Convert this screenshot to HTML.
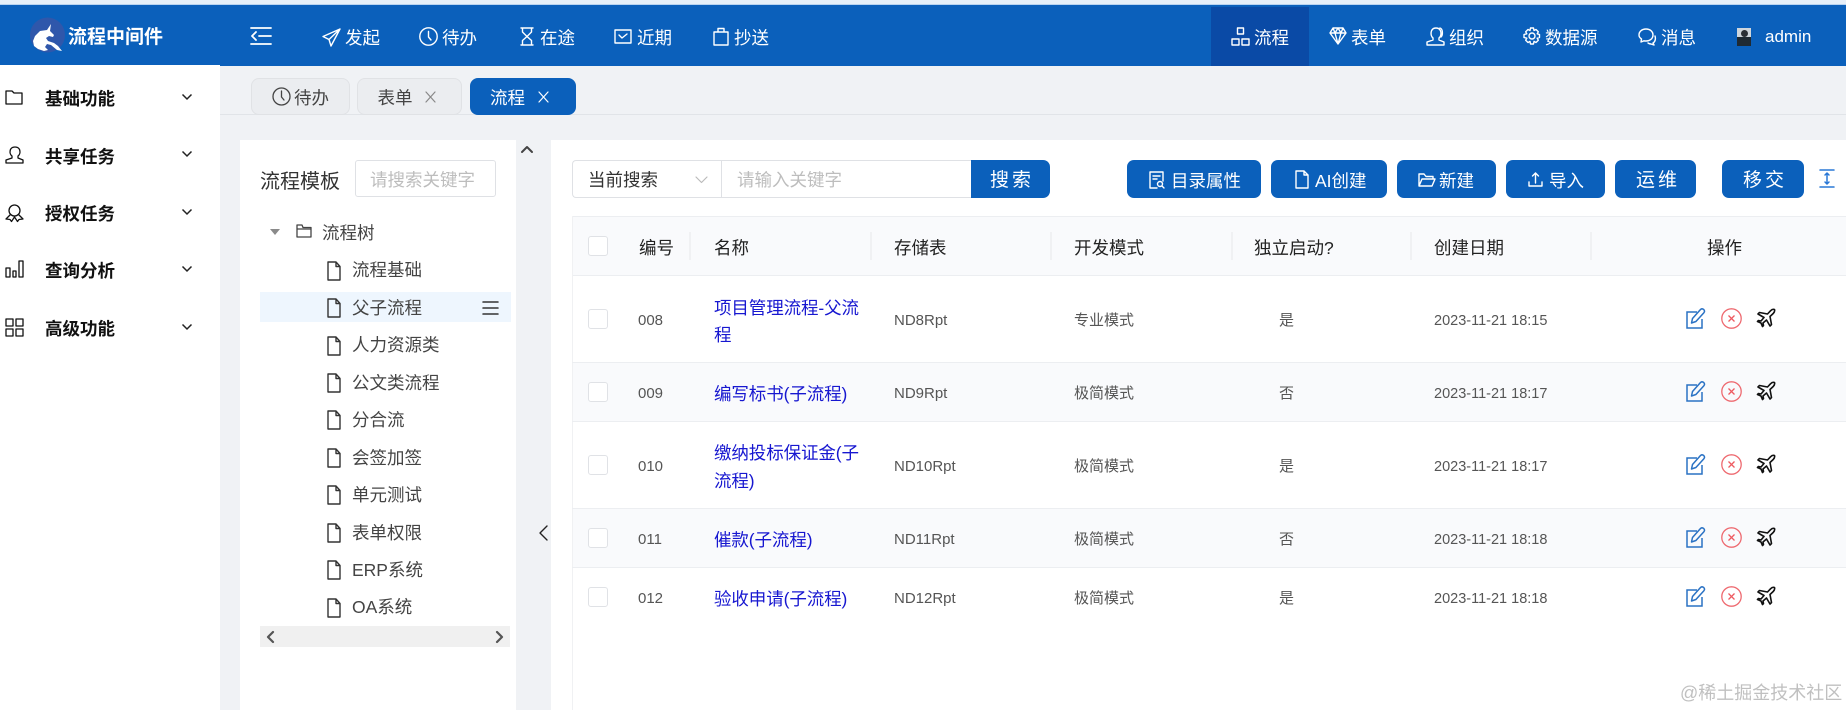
<!DOCTYPE html>
<html lang="zh"><head><meta charset="utf-8"><title>流程中间件</title>
<style>
html,body{margin:0;padding:0}
body{width:1846px;height:710px;overflow:hidden;position:relative;background:#f0f2f5;font-family:"Liberation Sans","Noto Sans CJK SC",sans-serif;font-size:17.5px;color:#333}
div,span,svg{position:absolute;box-sizing:border-box}
.t{white-space:nowrap;line-height:24px;height:24px;margin-top:1px}
.w{color:#fff}
.b{background:#0b60bb;border-radius:7px;height:38px;top:160px}
.m{font-weight:700;color:#111;left:45px}
.tr{left:352px;color:#444}
.h{color:#222;top:235px}
.c{font-size:15px;color:#555}
.n{left:714px;color:#1717d0;letter-spacing:-.1px}
.sep{width:2px;height:28px;top:232px;background:#f0f1f3}
.cb{left:588px;width:19.5px;height:19.5px;border:1px solid #e0e2e6;border-radius:3px;background:#fff}
.rl{left:572px;width:1274px;height:1px;background:#eceef1}
.i{overflow:visible;fill:none;stroke-linecap:round;stroke-linejoin:round}
.nv{stroke:#fff;stroke-width:1.4}
</style></head><body>
<svg width="0" height="0" style="left:0;top:0">
<defs>
<symbol id="file" viewBox="0 0 14 20"><path d="M1 1h8l4 4.5V19H1zM9 1v4.5h4" fill="none" stroke="#333" stroke-width="1.4" stroke-linejoin="round"/></symbol>
<symbol id="edit" viewBox="0 0 21 21"><path d="M11 4H1v16h15v-9" fill="none" stroke="#2a72c4" stroke-width="1.5"/><path d="M5.5 15l1-4.500 8-9c1-1 2.200-.8 3.200 0 1 1 1 2.200.2 3.200l-8 8.800z" fill="none" stroke="#2a72c4" stroke-width="1.5" stroke-linejoin="round"/></symbol>
<symbol id="del" viewBox="0 0 21 21"><circle cx="10.500" cy="10.500" r="9.700" fill="none" stroke="#ee6a70" stroke-width="1.300"/><path d="M7.500 7.500l6 6M13.500 7.500l-6 6" stroke="#ee5a60" stroke-width="1.300"/></symbol>
<symbol id="plane" viewBox="0 0 20 20"><path d="M18.500 1.500c-1.500-.5-3 .3-4 1.300L11.500 6 3.500 4.500 2 6l6 3.500L5 13l-2.500-.5-1 1L5 15l1.500 3.500 1-1L7 15l3.500-3 3.500 6 1.500-1.500L14 8.500l3.200-3c1-1 1.800-2.500 1.300-4z" fill="none" stroke="#111" stroke-width="1.600" stroke-linejoin="round"/></symbol>
<symbol id="chev" viewBox="0 0 12 8"><path d="M1.500 1.500L6 6l4.500-4.500" fill="none" stroke="#222" stroke-width="1.500"/></symbol>
</defs></svg>

<!-- header -->
<div style="left:0;top:0;width:1846px;height:5px;background:#e6eff9;border-bottom:1px solid #b9d3f0"></div>
<div style="left:0;top:5px;width:1846px;height:60.500px;background:#0b60bb"></div>
<div style="left:1211px;top:7px;width:98px;height:58.500px;background:#0a4aa6"></div>
<svg style="left:30px;top:17px" width="36" height="37" viewBox="30 17 36 37"><circle cx="47.500" cy="35" r="17.500" fill="#2f57ab"/><path d="M51 24L47 30 40 31 35 36 33 41 34 46 38 49 44 51 48 50 45 47 47 44 51 45 57 50 62 51 58 46 54 43 48 41 46 38 49 36 53 37 54 35 50 31z" fill="#fff"/></svg>
<span class="t w" style="left:68px;top:25px;font-size:19px;font-weight:700">流程中间件</span>
<svg class="i nv" style="left:251px;top:27px;stroke-width:1.800" width="21" height="18"><path d="M0 1h20M8 9h12M0 17h20M5 5L1 9l4 4"/></svg>

<svg class="i nv" style="left:322px;top:28px" width="19" height="19"><path d="M18 1L1 8.500l6 3 2 6.500zM7 11.500L18 1"/></svg>
<span class="t w" style="left:345px;top:25px">发起</span>
<svg class="i nv" style="left:419px;top:27px" width="19" height="19"><circle cx="9.500" cy="9.500" r="8.700"/><path d="M9.500 4.500v5.500l2.500 3"/></svg>
<span class="t w" style="left:442px;top:25px">待办</span>
<svg class="i nv" style="left:520px;top:27px" width="14" height="19"><path d="M1 1h12M1 18h12M2.500 1v4l4.500 4.500-4.500 4V18M11.500 1v4L7 9.500l4.500 4V18"/></svg>
<span class="t w" style="left:540px;top:25px">在途</span>
<svg class="i nv" style="left:614px;top:29px" width="18" height="15"><path d="M1 1h16v13H1zM5 6l3 3 5-4"/></svg>
<span class="t w" style="left:637px;top:25px">近期</span>
<svg class="i nv" style="left:713px;top:27px" width="16" height="19"><path d="M1 5h14v13H1zM5 5V1.500h6V5"/></svg>
<span class="t w" style="left:734px;top:25px">抄送</span>

<svg class="i nv" style="left:1231px;top:27px" width="19" height="19"><path d="M6.500 1h6v6h-6zM1 12h7v6H1zM11 12h7v6h-7z"/></svg>
<span class="t w" style="left:1254px;top:25px">流程</span>
<svg class="i nv" style="left:1329px;top:27px" width="18" height="18"><path d="M4 1h10l3 5-8 11L1 6zM1 6h16M6 6l3 11 3-11M4 1l2 5 3-5 3 5 2-5"/></svg>
<span class="t w" style="left:1351px;top:25px">表单</span>
<svg class="i nv" style="left:1426px;top:27px" width="19" height="19"><path d="M7 11c-3-2-3-10 3-10s6 8 3 10v2l5 2v3H1v-3l6-2zM14 1c3 1 3 7 1 9"/></svg>
<span class="t w" style="left:1449px;top:25px">组织</span>
<svg class="i nv" style="left:1523px;top:27px" width="18" height="18"><circle cx="9" cy="9" r="3"/><path d="M7.500 1h3l.5 2.500 2-1 2.300 2.300-1.100 2 2.300.7v3l-2.300.7 1.100 2-2.300 2.300-2-1.100-.5 2.600h-3L7 14.400l-2 1.100-2.300-2.300 1.100-2L1 10.500v-3l2.800-.7-1.100-2L5 2.500l2 1z"/></svg>
<span class="t w" style="left:1545px;top:25px">数据源</span>
<svg class="i nv" style="left:1638px;top:28px" width="19" height="18"><path d="M8 1c4 0 7 2.500 7 6s-3 6-7 6c-1 0-1.500 0-2-.2L3 14l.5-3C2 10 1 8.500 1 7c0-3.500 3-6 7-6zM17 8c1 3 0 6-2 7l1 2-3-1c-1 0-2-.3-3-1"/></svg>
<span class="t w" style="left:1661px;top:25px">消息</span>
<div style="left:1737px;top:28px;width:14px;height:18px;background:#cfd6dc"></div>
<div style="left:1737px;top:37px;width:14px;height:9px;background:#1f2a33"></div>
<div style="left:1741px;top:30px;width:7px;height:7px;background:#2a2f35;border-radius:50%"></div>
<span class="t w" style="left:1765px;top:24px;font-size:17px">admin</span>

<!-- sidebar -->
<div style="left:0;top:65px;width:220px;height:645px;background:#fff"></div>
<svg class="i" style="left:5px;top:90px;stroke:#111;stroke-width:1.300" width="18" height="15"><path d="M1 1h6l2 2h8v11H1z"/></svg>
<span class="t m" style="top:86px">基础功能</span>
<svg class="i" style="left:5px;top:146px;stroke:#111;stroke-width:1.300" width="19" height="18"><path d="M7 10c-3-2-3-9 3-9s6 7 3 9v2l5 2v3H1v-3l6-2z"/></svg>
<span class="t m" style="top:144px">共享任务</span>
<svg class="i" style="left:5px;top:204px;stroke:#111;stroke-width:1.300" width="19" height="18"><circle cx="9.500" cy="6.500" r="5.500"/><path d="M5 11l-4 4 4 .5 1.500 2L9.500 13l3 4.500 1.500-2 4-.5-4-4"/></svg>
<span class="t m" style="top:201px">授权任务</span>
<svg class="i" style="left:5px;top:260px;stroke:#111;stroke-width:1.300" width="19" height="18"><path d="M1 8h4v9H1zM8 11h3v6H8zM14 1h4v16h-4z"/></svg>
<span class="t m" style="top:258px">查询分析</span>
<svg class="i" style="left:5px;top:318px;stroke:#111;stroke-width:1.300" width="19" height="19"><path d="M1 1h7v7H1zM11 1h7v7h-7zM1 11h7v7H1zM11 11h7v7h-7z"/></svg>
<span class="t m" style="top:316px">高级功能</span>
<svg style="left:181px;top:93px" width="12" height="8"><use href="#chev"/></svg>
<svg style="left:181px;top:150px" width="12" height="8"><use href="#chev"/></svg>
<svg style="left:181px;top:208px" width="12" height="8"><use href="#chev"/></svg>
<svg style="left:181px;top:265px" width="12" height="8"><use href="#chev"/></svg>
<svg style="left:181px;top:323px" width="12" height="8"><use href="#chev"/></svg>

<!-- tabs -->
<div style="left:220px;top:114px;width:1626px;height:1px;background:#e1e4e8"></div>
<div style="left:251px;top:78px;width:99px;height:37px;background:#ebedf0;border:1px solid #e0e2e5;border-radius:8px"></div>
<svg class="i" style="left:272px;top:87px;stroke:#444;stroke-width:1.300" width="19" height="19"><circle cx="9.500" cy="9.500" r="8.500"/><path d="M9.500 4v6l2.500 3"/></svg>
<span class="t" style="left:294px;top:85px;color:#444">待办</span>
<div style="left:357px;top:78px;width:105px;height:37px;background:#ebedf0;border:1px solid #e0e2e5;border-radius:8px"></div>
<span class="t" style="left:377.500px;top:85px;color:#444">表单</span>
<svg class="i" style="left:425px;top:91px;stroke:#888;stroke-width:1.200" width="11" height="12"><path d="M1 1l9 10M10 1l-9 10"/></svg>
<div style="left:470px;top:78px;width:106px;height:37px;background:#0b60bb;border-radius:8px"></div>
<span class="t w" style="left:490px;top:85px">流程</span>
<svg class="i" style="left:538px;top:91px;stroke:#fff;stroke-width:1.200" width="11" height="12"><path d="M1 1l9 10M10 1l-9 10"/></svg>

<!-- tree panel -->
<div style="left:240px;top:140px;width:276px;height:570px;background:#fff"></div>
<svg class="i" style="left:521px;top:145px;stroke:#444;stroke-width:2" width="12" height="9"><path d="M1 7l5-5 5 5"/></svg>
<svg class="i" style="left:539px;top:525px;stroke:#222;stroke-width:1.400" width="9" height="16"><path d="M8 1L1 8l7 7"/></svg>
<span class="t" style="left:260px;top:167px;font-size:20px;color:#333;height:28px;line-height:28px">流程模板</span>
<div style="left:355px;top:160px;width:141px;height:37px;border:1px solid #dfe1e5;border-radius:3px;background:#fff"></div>
<span class="t" style="left:370px;top:167px;color:#bdbdbd">请搜索关键字</span>
<svg style="left:270px;top:228px" width="10" height="8"><path d="M0 1h10L5 7z" fill="#8a8a8a"/></svg>
<svg class="i" style="left:296px;top:224px;stroke:#444;stroke-width:1.300" width="16" height="14"><path d="M1 3.500V1h5l1 2.500h8V13H1zM1 5h14"/></svg>
<span class="t tr" style="left:322px;top:220px">流程树</span>
<div style="left:260px;top:292px;width:251px;height:30px;background:#eef6fe"></div>
<svg class="i" style="left:483px;top:301px;stroke:#333;stroke-width:1.500" width="16" height="14"><path d="M0 1h15M0 7h15M0 13h15"/></svg>
<svg style="left:327px;top:261px" width="14" height="20"><use href="#file"/></svg><span class="t tr" style="top:257px">流程基础</span>
<svg style="left:327px;top:298px" width="14" height="20"><use href="#file"/></svg><span class="t tr" style="top:295px">父子流程</span>
<svg style="left:327px;top:336px" width="14" height="20"><use href="#file"/></svg><span class="t tr" style="top:332px">人力资源类</span>
<svg style="left:327px;top:373px" width="14" height="20"><use href="#file"/></svg><span class="t tr" style="top:370px">公文类流程</span>
<svg style="left:327px;top:410px" width="14" height="20"><use href="#file"/></svg><span class="t tr" style="top:407px">分合流</span>
<svg style="left:327px;top:448px" width="14" height="20"><use href="#file"/></svg><span class="t tr" style="top:445px">会签加签</span>
<svg style="left:327px;top:485px" width="14" height="20"><use href="#file"/></svg><span class="t tr" style="top:482px">单元测试</span>
<svg style="left:327px;top:523px" width="14" height="20"><use href="#file"/></svg><span class="t tr" style="top:520px">表单权限</span>
<svg style="left:327px;top:560px" width="14" height="20"><use href="#file"/></svg><span class="t tr" style="top:557px">ERP系统</span>
<svg style="left:327px;top:598px" width="14" height="20"><use href="#file"/></svg><span class="t tr" style="top:594px">OA系统</span>
<div style="left:260px;top:626px;width:250px;height:21px;background:#f0f0f0"></div>
<svg class="i" style="left:266px;top:631px;stroke:#555;stroke-width:2.200" width="9" height="12"><path d="M7 1L2 6l5 5"/></svg>
<svg class="i" style="left:495px;top:631px;stroke:#555;stroke-width:2.200" width="9" height="12"><path d="M2 1l5 5-5 5"/></svg>

<!-- main panel -->
<div style="left:551px;top:140px;width:1295px;height:570px;background:#fff"></div>
<div style="left:572px;top:160px;width:399px;height:38px;border:1px solid #dfe1e5;border-right:0;border-radius:4px 0 0 4px"></div>
<div style="left:721px;top:160px;width:1px;height:38px;background:#dfe1e5"></div>
<span class="t" style="left:588px;top:167px;color:#333">当前搜索</span>
<svg class="i" style="left:695px;top:176px;stroke:#bbb;stroke-width:1.200" width="13" height="8"><path d="M1 1l5.500 5.500L12 1"/></svg>
<span class="t" style="left:737px;top:167px;color:#bdbdbd">请输入关键字</span>
<div style="left:971px;top:160px;width:79px;height:38px;background:#0b60bb;border-radius:0 7px 7px 0"></div>
<span class="t w" style="left:990px;top:168px;font-size:19px;letter-spacing:3px">搜索</span>

<div class="b" style="left:1127px;width:134px"></div>
<svg class="i nv" style="left:1149px;top:171px" width="16" height="19"><path d="M8 17H1V1h13v9M4 5h7M4 8h4"/><circle cx="11" cy="13" r="2.500"/><path d="M13 15l2 2"/></svg>
<span class="t w" style="left:1171px;top:168px">目录属性</span>
<div class="b" style="left:1271px;width:116px"></div>
<svg class="i nv" style="left:1295px;top:170px" width="14" height="19"><path d="M1 1h8l4 4v13H1zM9 1v4h4"/></svg>
<span class="t w" style="left:1315px;top:168px">AI创建</span>
<div class="b" style="left:1397px;width:99px"></div>
<svg class="i nv" style="left:1418px;top:173px" width="18" height="14"><path d="M1 13V1h5l2 2.500h7V6M1 13l3-7h13l-3 7z"/></svg>
<span class="t w" style="left:1439px;top:168px">新建</span>
<div class="b" style="left:1506px;width:99px"></div>
<svg class="i nv" style="left:1528px;top:172px" width="15" height="15"><path d="M7.500 11V1M4.500 4l3-3 3 3M1 10v4h13v-4"/></svg>
<span class="t w" style="left:1549px;top:168px">导入</span>
<div class="b" style="left:1615px;width:81px"></div>
<span class="t w" style="left:1636px;top:168px;font-size:19px;letter-spacing:3px">运维</span>
<div class="b" style="left:1722px;width:82px"></div>
<span class="t w" style="left:1743px;top:168px;font-size:19px;letter-spacing:3px">移交</span>
<svg class="i" style="left:1819px;top:169px;stroke:#2a78d6;stroke-width:1.500" width="16" height="19"><path d="M1 1h14M1 18h14M8 4v11M6 6l2-2 2 2M6 13l2 2 2-2"/></svg>

<!-- table -->
<div style="left:572px;top:216px;width:1274px;height:60px;background:#f9fafc;border-top:1px solid #eceef1;border-bottom:1px solid #eceef1"></div>
<div style="left:572px;top:216px;width:1px;height:494px;background:#f0f1f3"></div>
<div style="left:573px;top:362px;width:1273px;height:59px;background:#f9fafc"></div>
<div style="left:573px;top:508px;width:1273px;height:59px;background:#f9fafc"></div>
<div class="rl" style="top:362px"></div><div class="rl" style="top:421px"></div><div class="rl" style="top:508px"></div><div class="rl" style="top:567px"></div>
<div class="sep" style="left:689px"></div><div class="sep" style="left:870px"></div><div class="sep" style="left:1050px"></div><div class="sep" style="left:1231px"></div><div class="sep" style="left:1410px"></div><div class="sep" style="left:1590px"></div>
<div class="cb" style="top:236px"></div>
<span class="t h" style="left:639px">编号</span><span class="t h" style="left:714px">名称</span><span class="t h" style="left:894px">存储表</span><span class="t h" style="left:1074px">开发模式</span><span class="t h" style="left:1254px">独立启动?</span><span class="t h" style="left:1434px">创建日期</span><span class="t h" style="left:1707px">操作</span>

<div class="cb" style="top:309px"></div><div class="cb" style="top:382px"></div><div class="cb" style="top:455px"></div><div class="cb" style="top:528px"></div><div class="cb" style="top:587px"></div>

<span class="t c" style="left:638px;top:308px">008</span>
<span class="t n" style="top:295px">项目管理流程-父流</span><span class="t n" style="top:322px">程</span>
<span class="t c" style="left:894px;top:308px">ND8Rpt</span><span class="t c" style="left:1074px;top:308px">专业模式</span><span class="t c" style="left:1279px;top:308px">是</span><span class="t c" style="left:1434px;top:308px;font-size:14.500px">2023-11-21 18:15</span>

<span class="t c" style="left:638px;top:381px">009</span>
<span class="t n" style="top:381px">编写标书(子流程)</span>
<span class="t c" style="left:894px;top:381px">ND9Rpt</span><span class="t c" style="left:1074px;top:381px">极简模式</span><span class="t c" style="left:1279px;top:381px">否</span><span class="t c" style="left:1434px;top:381px;font-size:14.500px">2023-11-21 18:17</span>

<span class="t c" style="left:638px;top:454px">010</span>
<span class="t n" style="top:440px">缴纳投标保证金(子</span><span class="t n" style="top:468px">流程)</span>
<span class="t c" style="left:894px;top:454px">ND10Rpt</span><span class="t c" style="left:1074px;top:454px">极简模式</span><span class="t c" style="left:1279px;top:454px">是</span><span class="t c" style="left:1434px;top:454px;font-size:14.500px">2023-11-21 18:17</span>

<span class="t c" style="left:638px;top:527px">011</span>
<span class="t n" style="top:527px">催款(子流程)</span>
<span class="t c" style="left:894px;top:527px">ND11Rpt</span><span class="t c" style="left:1074px;top:527px">极简模式</span><span class="t c" style="left:1279px;top:527px">否</span><span class="t c" style="left:1434px;top:527px;font-size:14.500px">2023-11-21 18:18</span>

<span class="t c" style="left:638px;top:586px">012</span>
<span class="t n" style="top:586px">验收申请(子流程)</span>
<span class="t c" style="left:894px;top:586px">ND12Rpt</span><span class="t c" style="left:1074px;top:586px">极简模式</span><span class="t c" style="left:1279px;top:586px">是</span><span class="t c" style="left:1434px;top:586px;font-size:14.500px">2023-11-21 18:18</span>

<svg style="left:1686px;top:308px" width="21" height="21"><use href="#edit"/></svg><svg style="left:1721px;top:308px" width="21" height="21"><use href="#del"/></svg><svg style="left:1756px;top:308px" width="20" height="20"><use href="#plane"/></svg>
<svg style="left:1686px;top:381px" width="21" height="21"><use href="#edit"/></svg><svg style="left:1721px;top:381px" width="21" height="21"><use href="#del"/></svg><svg style="left:1756px;top:381px" width="20" height="20"><use href="#plane"/></svg>
<svg style="left:1686px;top:454px" width="21" height="21"><use href="#edit"/></svg><svg style="left:1721px;top:454px" width="21" height="21"><use href="#del"/></svg><svg style="left:1756px;top:454px" width="20" height="20"><use href="#plane"/></svg>
<svg style="left:1686px;top:527px" width="21" height="21"><use href="#edit"/></svg><svg style="left:1721px;top:527px" width="21" height="21"><use href="#del"/></svg><svg style="left:1756px;top:527px" width="20" height="20"><use href="#plane"/></svg>
<svg style="left:1686px;top:586px" width="21" height="21"><use href="#edit"/></svg><svg style="left:1721px;top:586px" width="21" height="21"><use href="#del"/></svg><svg style="left:1756px;top:586px" width="20" height="20"><use href="#plane"/></svg>

<span class="t" style="left:1680px;top:680px;font-size:18px;color:#c0c0c0">@稀土掘金技术社区</span>
</body></html>
